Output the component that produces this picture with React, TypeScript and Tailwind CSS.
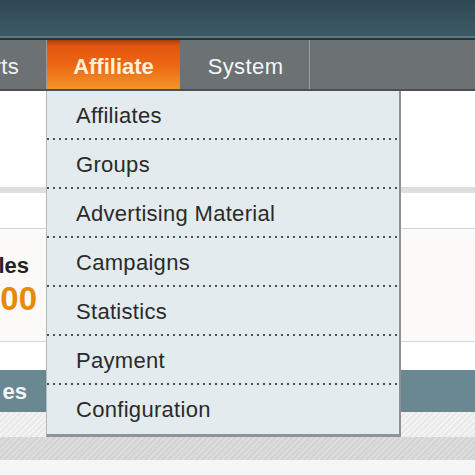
import React from "react";

const items = [
  "Affiliates",
  "Groups",
  "Advertising Material",
  "Campaigns",
  "Statistics",
  "Payment",
  "Configuration",
];

export default function App() {
  return (
    <div
      className="relative w-[475px] h-[475px] overflow-hidden bg-white"
      style={{ fontFamily: '"Liberation Sans", Arial, sans-serif' }}
    >
      {/* header */}
      <div className="h-[36px] bg-[linear-gradient(to_bottom,#2e4852,#3d5a64)]" />
      <div className="h-[2px] bg-[#62767d]" />
      <div className="h-[2px] bg-[#26363d]" />
      {/* nav */}
      <div className="flex h-[51px] bg-[#6c7174] border-b-2 border-[#4b5053]">
        <div className="flex w-[47px] items-center justify-end overflow-hidden border-r border-[#969ca0] pr-[27px] pt-[3px]">
          <span className="whitespace-nowrap text-[22px] tracking-[0.3px] text-[#f2f4f5]">
            Reports
          </span>
        </div>
        <div className="flex w-[133px] items-center justify-center bg-[linear-gradient(to_bottom,#a8400f_0%,#e4560e_12%,#ec6613_50%,#f2952a_100%)] pt-[3px]">
          <span className="text-[22px] font-bold text-[#fdf0dc]">Affiliate</span>
        </div>
        <div className="flex w-[130px] items-center justify-center border-r border-[#979da1] pl-[2px] pt-[3px]">
          <span className="text-[22px] tracking-[0.4px] text-[#f4f6f7]">System</span>
        </div>
        <div className="flex-1" />
      </div>

      {/* content */}
      <div className="h-[96px] bg-white" />
      <div className="h-[6px] bg-[#dfdfdf]" />
      <div className="h-[35px] bg-white" />
      <div className="h-px bg-[#d3d3d3]" />
      <div className="flex h-[112px] bg-[#fbfaf9]">
        <div className="flex w-[46px] flex-col overflow-hidden pt-[24px]">
          <div className="flex justify-end pr-[17px]">
            <span className="whitespace-nowrap text-[22px] font-bold leading-[26px] text-[#222]">
              Lifetime Sales
            </span>
          </div>
          <div className="flex justify-end pr-[9px] pt-[1px]">
            <span className="whitespace-nowrap text-[33px] font-bold leading-[38px] text-[#e8890a]">
              $0.00
            </span>
          </div>
        </div>
      </div>
      <div className="h-px bg-[#d6d6d6]" />
      <div className="h-[28px] bg-white" />
      <div className="flex h-[42px] items-center bg-[#6a8891]">
        <div className="ml-[2px] flex w-[25px] justify-end overflow-hidden">
          <span className="whitespace-nowrap text-[22px] font-bold text-[#f3f6f7]">
            Top Categories
          </span>
        </div>
      </div>
      <div className="h-[25px] bg-[repeating-linear-gradient(135deg,#f3f3f3_0px,#f3f3f3_2px,#e9e9e9_2px,#e9e9e9_4px)]" />
      <div className="h-[23px] bg-[repeating-linear-gradient(135deg,#dcdcdc_0px,#dcdcdc_2px,#d3d3d3_2px,#d3d3d3_4px)]" />
      <div className="h-[15px] bg-[#f6f6f6]" />

      {/* dropdown */}
      <div className="absolute left-[46px] top-[91px] w-[355px] border-l border-r-2 border-b-[3px] border-l-[#b3babd] border-r-[#8d9294] border-b-[#8e9395] bg-[#e3ebee]">
        {items.map((it, i) => (
          <div key={it} className="flex flex-col">
            <div className="flex h-[47px] items-center pl-[29px] pt-[2px]">
              <span className="text-[22px] tracking-[0.3px] text-[#2a2a2a]">{it}</span>
            </div>
            {i < items.length - 1 ? (
              <div className="h-[2px] bg-[linear-gradient(to_right,#505050_2px,transparent_2px)] bg-[length:6px_2px] bg-repeat-x" />
            ) : (
              <div className="h-[2px]" />
            )}
          </div>
        ))}
      </div>
    </div>
  );
}
